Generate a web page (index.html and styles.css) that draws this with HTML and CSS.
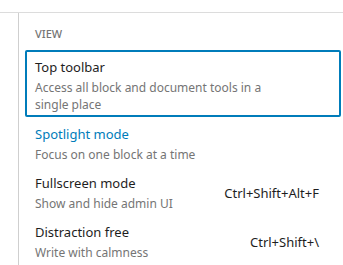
FILE: index.html
```html
<!DOCTYPE html>
<html lang="en">
<head>
  <meta charset="UTF-8" />
  <title>View options</title>
  <link rel="stylesheet" href="styles.css">
</head>
<body>
  <div class="stage">
    <div class="main">
      <div class="popover">
        <div class="group-label">View</div>
        <div class="menu">
          <div class="item focused">
            <div class="text">
              <div class="title">Top toolbar</div>
              <div class="desc">Access all block and document tools in a single place</div>
            </div>
          </div>
          <div class="item hover">
            <div class="text">
              <div class="title">Spotlight mode</div>
              <div class="desc">Focus on one block at a time</div>
            </div>
          </div>
          <div class="item">
            <div class="text">
              <div class="title">Fullscreen mode</div>
              <div class="desc">Show and hide admin UI</div>
            </div>
            <span class="shortcut">Ctrl+Shift+Alt+F</span>
          </div>
          <div class="item">
            <div class="text">
              <div class="title">Distraction free</div>
              <div class="desc">Write with calmness</div>
            </div>
            <span class="shortcut">Ctrl+Shift+\</span>
          </div>
        </div>
      </div>
    </div>
    <div class="scrollbar"><span class="arrow"></span></div>
  </div>
</body>
</html>
```

FILE: styles.css
```css
html, body {
  margin: 0;
  background: #fff;
  height: 100%;
  overflow: hidden;
}
body {
  font-family: "Noto Sans", "Open Sans", sans-serif;
  color: #1e1e1e;
  padding-top: 12px;
  box-sizing: border-box;
}
.stage {
  display: flex;
  height: 100%;
}
.main {
  flex: 1;
  border-top: 1px solid #dcdcdc;
  padding-left: 18px;
}
.scrollbar {
  width: 7px;
  background: #f0f0f0;
  padding-top: 9px;
  display: flex;
  justify-content: center;
  align-items: flex-start;
}
.arrow {
  width: 0;
  height: 0;
  border-left: 4px solid transparent;
  border-bottom: 4px solid #a3a3a3;
}
.popover {
  width: 316px;
  height: 100%;
  border-left: 1px solid #cfcfcf;
  border-right: 1px solid #cfcfcf;
  padding: 0 6px;
}
.group-label {
  font-size: 11px;
  font-weight: 500;
  text-transform: uppercase;
  color: #757575;
  padding: 13px 10px 0;
  line-height: 16px;
  height: 24px;
}
.item {
  display: flex;
  align-items: center;
  justify-content: space-between;
  padding: 7px 22px 3px 10px;
  border-radius: 2px;
}
.item.focused {
  box-shadow: 0 0 0 2px #007cba inset;
  padding-bottom: 4px;
}
.title {
  font-size: 13px;
  line-height: 20px;
}
.hover .title {
  color: #007cba;
}
.desc {
  font-size: 12px;
  line-height: 17px;
  color: #757575;
  margin-top: 2px;
  max-width: 236px;
}
.shortcut {
  font-size: 13px;
  color: #1e1e1e;
}
```
